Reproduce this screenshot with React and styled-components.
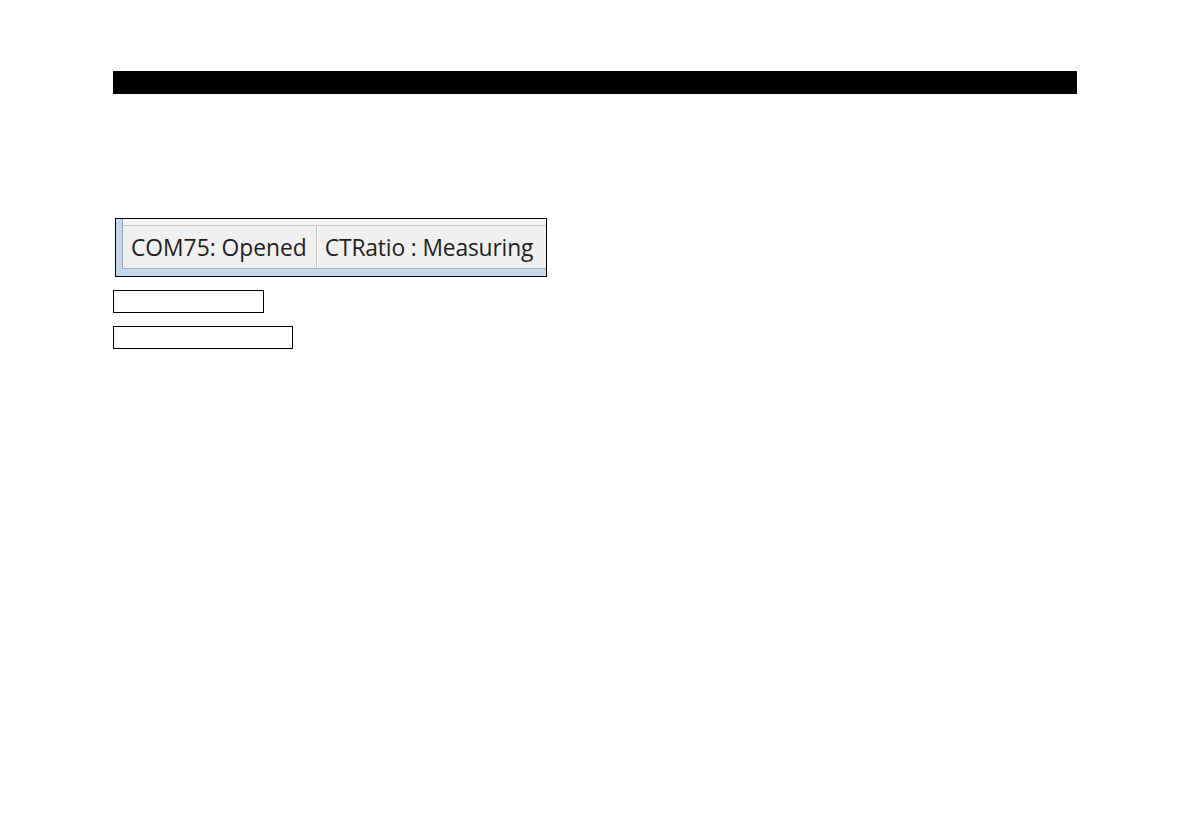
import React from "react";
import styled, { createGlobalStyle } from "styled-components";

const Global = createGlobalStyle`
  html, body { margin: 0; padding: 0; background: #fff; }
  body { font-family: "Open Sans", "Noto Sans", sans-serif; }
`;

const Page = styled.div`
  padding: 71px 114px 0 113px;
  display: flex;
  flex-direction: column;
  align-items: flex-start;
`;

const TitleBar = styled.div`
  width: 964px;
  height: 23px;
  background: #000;
`;

const Shot = styled.div`
  margin-top: 124px;
  margin-left: 2px;
  width: 432px;
  height: 59px;
  box-sizing: border-box;
  border: 1px solid #000;
  background: #c3d8ee;
  display: flex;
  flex-direction: column;
  padding: 0 0 7px 6px;
  overflow: hidden;
`;

const Window = styled.div`
  flex: 1;
  display: flex;
  flex-direction: column;
  border-left: 1px solid #9aa3ad;
  border-bottom: 1px solid #aeb4bb;
  background: #f0f0f0;
  min-width: 0;
`;

const ContentEdge = styled.div`
  height: 6px;
  background: #f4f4f4;
  border-bottom: 1px solid #c9c9c9;
`;

const StatusRow = styled.div`
  flex: 1;
  display: flex;
  align-items: center;
  white-space: nowrap;
`;

const Cell = styled.div`
  height: 100%;
  flex: none;
  display: flex;
  align-items: center;
  padding: 0 ${(p) => p.$pr ?? 9}px 0 ${(p) => p.$pl ?? 8}px;
  font-size: 22.8px;
  letter-spacing: ${(p) => p.$ls ?? 0}px;
  color: #1f1f1f;
  border-right: ${(p) => (p.$sep ? "1px solid #c4c4c4" : "none")};
  box-shadow: ${(p) => (p.$sep ? "1px 0 0 #fff" : "none")};
`;

const Field = styled.div`
  width: ${(p) => p.$w}px;
  height: 21px;
  border: 1px solid #000;
  margin-top: ${(p) => p.$mt}px;
`;

export default function App() {
  return (
    <>
      <Global />
      <Page>
        <TitleBar />
        <Shot>
          <Window>
            <ContentEdge />
            <StatusRow>
              <Cell $sep>COM75: Opened</Cell>
              <Cell $pl={8} $ls={-0.15}>CTRatio : Measuring</Cell>
            </StatusRow>
          </Window>
        </Shot>
        <Field $w={149} $mt={13} />
        <Field $w={178} $mt={13} />
      </Page>
    </>
  );
}
